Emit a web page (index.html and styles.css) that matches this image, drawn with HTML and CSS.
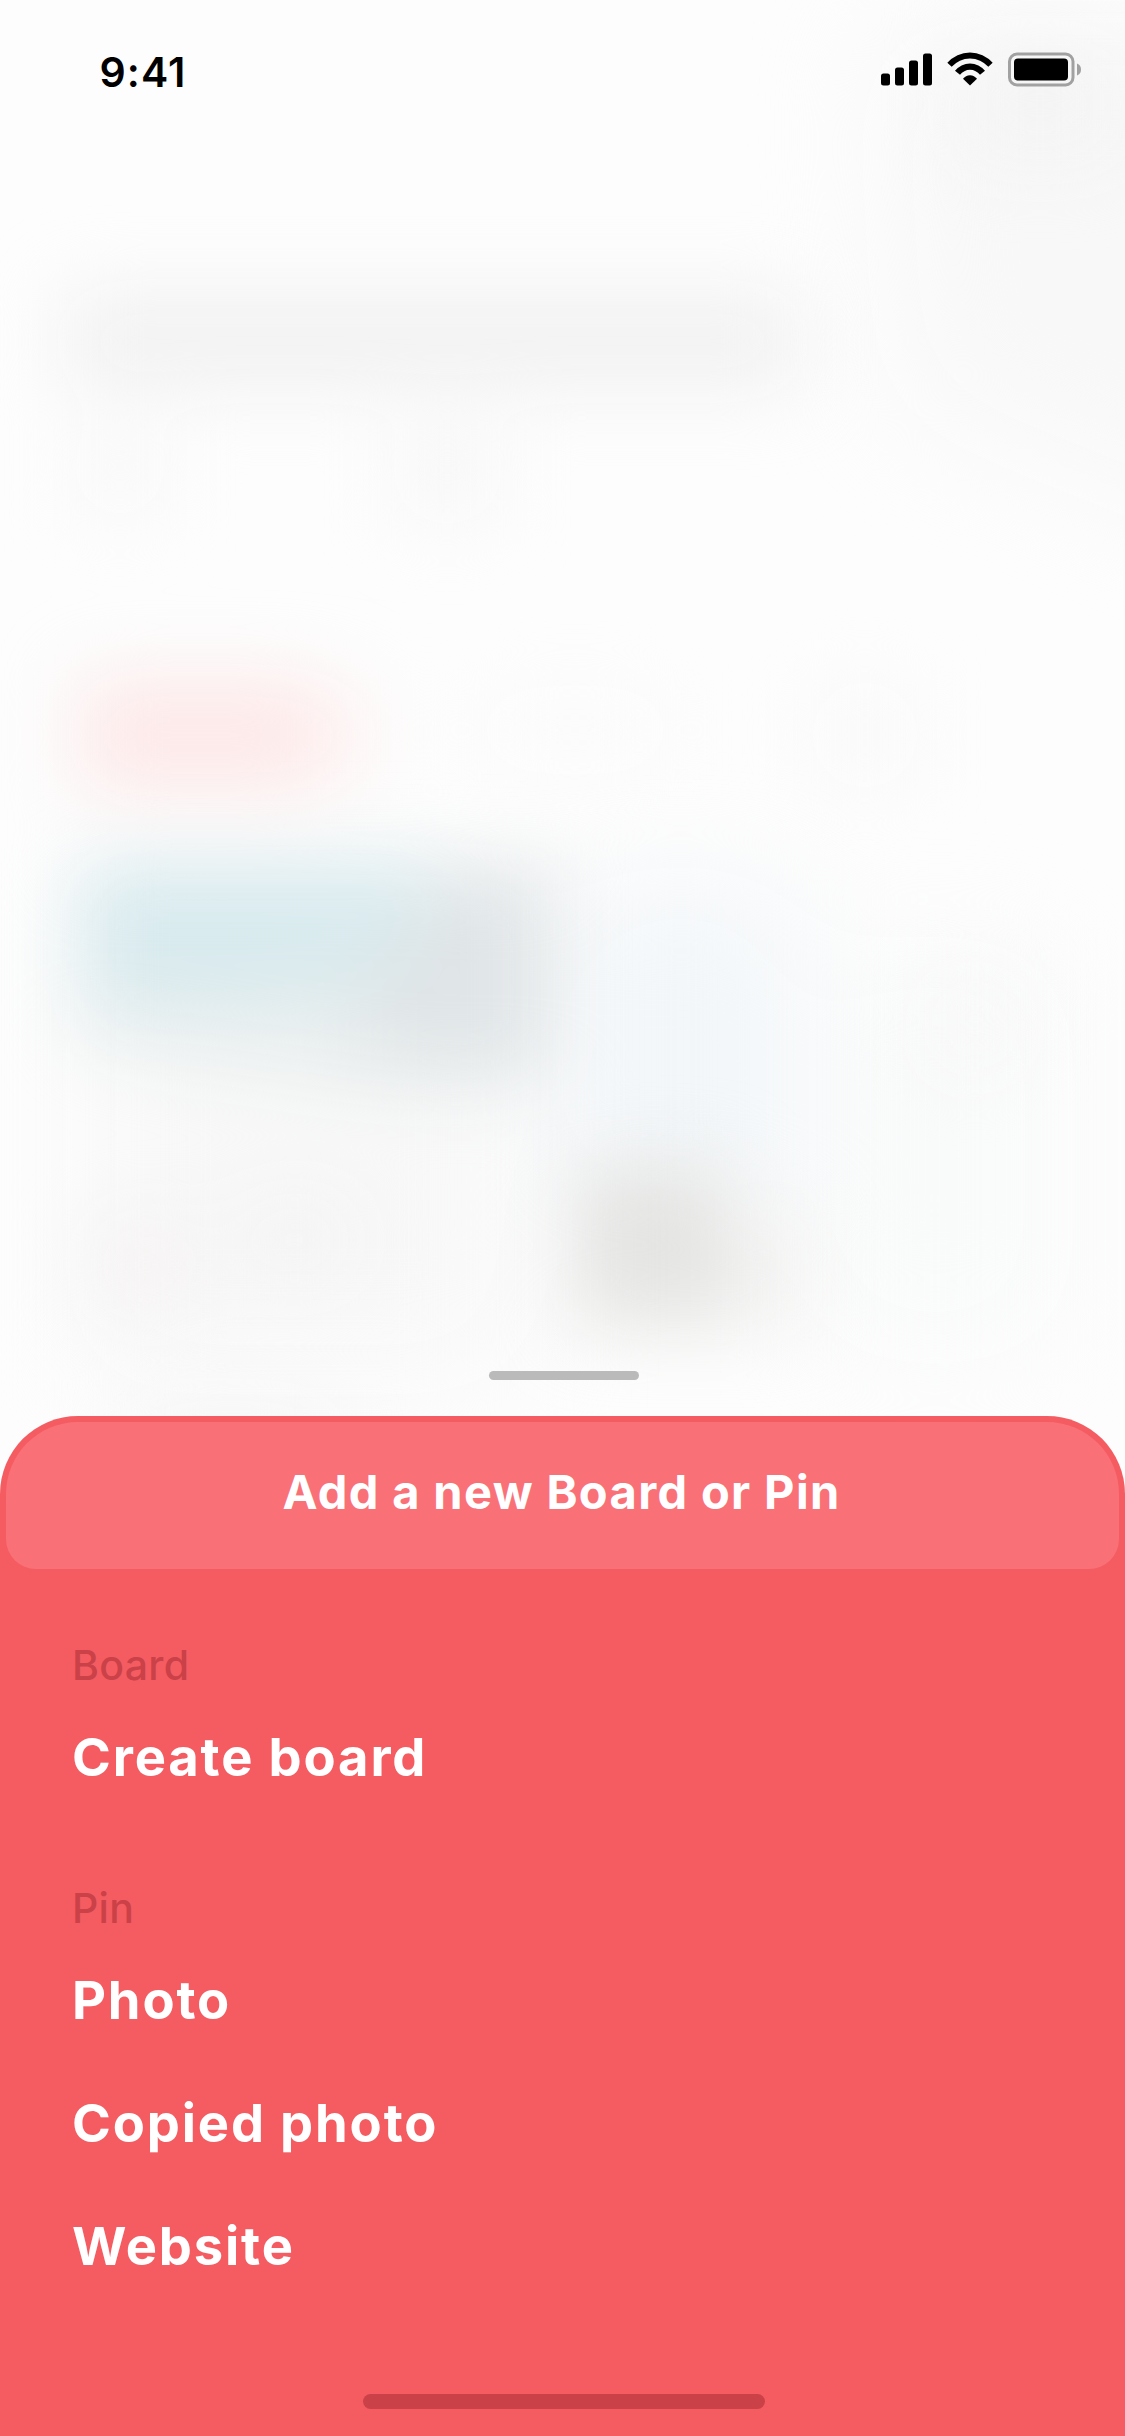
FILE: index.html
```html
<!DOCTYPE html>
<html lang="en">
<head>
<meta charset="utf-8">
<title>Add a new Board or Pin</title>
<link rel="stylesheet" href="styles.css">
</head>
<body>
<div class="screen">
  <svg class="backdrop" viewBox="0 0 1125 1500" aria-hidden="true">
    <defs>
      <filter id="soft" x="-100" y="-100" width="1400" height="1700" filterUnits="userSpaceOnUse" color-interpolation-filters="sRGB"><feGaussianBlur stdDeviation="38"/></filter>
      <filter id="softer" x="-100" y="-100" width="1500" height="1700" filterUnits="userSpaceOnUse" color-interpolation-filters="sRGB"><feGaussianBlur stdDeviation="58"/></filter>
    </defs>
    <rect x="0" y="0" width="1125" height="1500" fill="#fdfdfd"/>
    <g filter="url(#softer)">
      <path d="M880 40H1300V560L900 400Z" fill="#f8f8f8"/>
      <rect x="90" y="900" width="430" height="470" fill="#f8f8f8"/>
      <rect x="570" y="890" width="220" height="330" fill="#f2f6f9"/>
      <rect x="820" y="960" width="230" height="380" fill="#f9fafa"/>
    </g>
    <g filter="url(#soft)">
      <rect x="960" y="50" width="160" height="110" fill="#f5f4f4"/>
      <rect x="65" y="295" width="735" height="92" fill="#f1f1f1"/>
      <rect x="80" y="430" width="80" height="80" fill="#f8f8f8"/>
      <rect x="400" y="430" width="95" height="85" fill="#f7f7f7"/>
      <rect x="80" y="680" width="240" height="110" fill="#fde8e8"/>
      <rect x="320" y="695" width="50" height="80" fill="#fef3f2"/>
      <rect x="480" y="700" width="190" height="60" fill="#fbfbfb"/>
      <rect x="820" y="690" width="90" height="90" fill="#f9f9f9"/>
      <path d="M80 870H550V1085H400L80 1040Z" fill="#e9eeee"/>
      <path d="M80 865H440L400 975L250 1000H80Z" fill="#d8eaee"/>
      <path d="M450 870H550V1065H360V1000Z" fill="#e0e5e7"/>
      <rect x="575" y="1165" width="150" height="160" fill="#e4e4e2"/>
      <rect x="725" y="1210" width="80" height="115" fill="#f2f2f1"/>
      <rect x="90" y="1220" width="110" height="90" fill="#f6f3f3"/>
      <rect x="240" y="1200" width="110" height="80" fill="#f4f4f4"/>
      <rect x="130" y="1410" width="200" height="80" fill="#f5f5f5"/>
      <rect x="930" y="980" width="90" height="90" fill="#f8f8f8"/>
    </g>
  </svg>

  <header class="status">
    <time class="clock">9:41</time>
    <svg class="indicators" viewBox="0 0 201 35" aria-hidden="true">
      <rect x="0" y="21.500" width="9" height="12" rx="2.500"/>
      <rect x="14" y="15.500" width="9" height="18" rx="2.500"/>
      <rect x="28" y="8.500" width="9" height="25" rx="2.500"/>
      <rect x="42" y="1.500" width="9" height="32" rx="2.500"/>
      <g transform="translate(66 .5) scale(.33333)">
        <path d="M1 31A90 90 0 0 1 137 31L124 43A73 73 0 0 0 14 43Z"/>
        <path d="M24 55A57 57 0 0 1 114 55L99 67A37.500 37.500 0 0 0 39 67Z"/>
        <path d="M48 79A25.500 25.500 0 0 1 90 79L69 99Z"/>
      </g>
      <rect class="case" x="128.500" y="2" width="63.500" height="31" rx="7.500"/>
      <rect x="133" y="6.500" width="54" height="22" rx="4"/>
      <path class="nub" d="M196 11.500Q200 13 200 17.500T196 23.500Z"/>
    </svg>
  </header>

  <div class="grabber"></div>

  <main class="sheet">
    <h1 class="sheet-title">Add a new Board or Pin</h1>
    <section class="group">
      <h2 class="group-label">Board</h2>
      <div class="action">Create board</div>
    </section>
    <section class="group">
      <h2 class="group-label">Pin</h2>
      <div class="action">Photo</div>
      <div class="action">Copied photo</div>
      <div class="action">Website</div>
    </section>
    <div class="home-bar"></div>
  </main>
</div>
</body>
</html>
```
FILE: styles.css
```css
* { box-sizing: border-box; }

body {
  margin: 0;
  font-family: Inter, "Liberation Sans", sans-serif;
}

.screen {
  position: relative;
  display: flex;
  flex-direction: column;
  width: 1125px;
  height: 2436px;
  overflow: hidden;
  background: #fdfdfd;
}

/* Blurred page showing behind the sheet */
.backdrop {
  position: absolute;
  top: 0;
  left: 0;
  width: 1125px;
  height: 1500px;
}

.status {
  position: relative;
  display: flex;
  justify-content: space-between;
  align-items: flex-start;
  height: 132px;
  padding: 47px 43px 0 99.500px;
}

.clock {
  font-size: 41px;
  font-weight: 600;
  line-height: 50px;
  letter-spacing: 1.100px;
}

.indicators {
  width: 201px;
  height: 35px;
  margin-top: 4.500px;
}

.case {
  fill: none;
  stroke: #a1a1a1;
  stroke-width: 3;
}

.nub { fill: #a1a1a1; }

.grabber {
  position: relative;
  width: 150px;
  height: 9px;
  margin: auto auto 36px 489px;
  border-radius: 5px;
  background: #bababa;
}

.sheet {
  position: relative;
  display: flex;
  flex-direction: column;
  height: 1020px;
  padding: 6px 6px 27px;
  border-radius: 78px 78px 0 0;
  background: #f45c62;
  color: #fff;
}

.sheet-title {
  height: 147px;
  margin: 0 0 66px;
  padding-right: 2px;
  border-radius: 72px 72px 30px 30px;
  background: #fa7077;
  font-size: 47px;
  font-weight: 700;
  line-height: 139px;
  letter-spacing: 1.350px;
  text-align: center;
}

.group {
  padding-left: 66px;
  margin-bottom: 60px;
}

.group-label {
  margin: 0;
  color: #ca4148;
  font-size: 41px;
  font-weight: 500;
  line-height: 61px;
  height: 60px;
  letter-spacing: 0.300px;
}

.action {
  height: 123px;
  font-size: 52.500px;
  font-weight: 700;
  line-height: 125px;
  letter-spacing: 1.850px;
}

.home-bar {
  width: 402px;
  height: 15px;
  margin: auto auto 0 357px;
  border-radius: 8px;
  background: #ca4148;
}
```
